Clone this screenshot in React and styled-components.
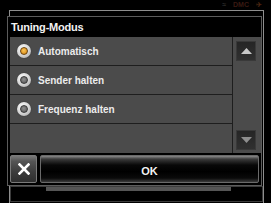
import React from "react";
import styled, { createGlobalStyle } from "styled-components";

const GlobalStyle = createGlobalStyle`
  html, body { margin: 0; padding: 0; background: #000; }
  * { box-sizing: border-box; }
`;

const Screen = styled.div`
  position: relative;
  width: 271px;
  height: 203px;
  overflow: hidden;
  background: #000;
  padding: 16px 0 0 7px;
  font-family: "Liberation Sans", Arial, sans-serif;
`;

const StatusIcons = styled.div`
  position: absolute;
  top: 0;
  right: 9px;
  display: flex;
  gap: 7px;
  font-size: 7px;
  font-weight: bold;
  line-height: 9px;
`;

const StatusGlyph = styled.span`
  color: ${(p) => p.$color};
`;

const BackWindow = styled.div`
  position: absolute;
  left: 9px;
  top: 10px;
  width: 255px;
  height: 200px;
  border: 1px solid #8e8e8e;
`;

const BackInner = styled.div`
  position: absolute;
  left: 0;
  right: 0;
  top: 175px;
  height: 16px;
  border: 1px solid #3c3c3c;
`;

const BackBar = styled.div`
  position: absolute;
  left: 36px;
  top: 176px;
  width: 185px;
  height: 4px;
  background: #555;
`;

const Dialog = styled.div`
  position: relative;
  z-index: 1;
  width: 255px;
  height: 170px;
  border: 1px solid #5c5c5c;
  background: #000;
  display: flex;
  flex-direction: column;
`;

const Title = styled.div`
  height: 20px;
  padding-left: 3px;
  color: #f2f2f2;
  font-size: 11px;
  font-weight: bold;
  line-height: 21px;
  letter-spacing: -0.2px;
`;

const Body = styled.div`
  height: 116px;
  padding-left: 2px;
  display: flex;
`;

const List = styled.div`
  flex: 1;
  background: #4b4b4b;
  display: flex;
  flex-direction: column;
`;

const Row = styled.div`
  height: 29px;
  flex: none;
  border-bottom: 1px solid #1e1e1e;
  display: flex;
  align-items: center;
  gap: 7px;
  padding-left: 7px;
  color: #ececec;
  font-size: 10px;
  font-weight: bold;
`;

const Radio = styled.span`
  width: 14px;
  height: 14px;
  border-radius: 50%;
  background: radial-gradient(circle at 40% 35%, #ffffff 0%, #d8d8d8 50%, #9a9a9a 100%);
  display: flex;
  align-items: center;
  justify-content: center;
  box-shadow: 0 0 1px #222;
`;

const RadioDot = styled.span`
  width: 8px;
  height: 8px;
  border-radius: 50%;
  border: 1px solid ${(p) => (p.$on ? "#6a4410" : "#3a3a3a")};
  background: ${(p) =>
    p.$on
      ? "radial-gradient(circle at 45% 40%, #f8c458 0%, #e49c28 60%, #b07010 100%)"
      : "radial-gradient(circle at 45% 40%, #8e8e8e 0%, #6a6a6a 60%, #4a4a4a 100%)"};
`;

const ScrollCol = styled.div`
  width: 29px;
  border-left: 1px solid #1e1e1e;
  background: #4b4b4b;
  display: flex;
  flex-direction: column;
  justify-content: space-between;
  align-items: flex-start;
  padding: 4px 4px 3px 3px;
`;

const ScrollButton = styled.div`
  width: 20px;
  height: 20px;
  background: linear-gradient(#252525, #303030);
  border: 1px solid #393939;
  display: flex;
  align-items: center;
  justify-content: center;
`;

const Footer = styled.div`
  height: 32px;
  padding: 2px;
  display: flex;
  gap: 3px;
`;

const CloseButton = styled.div`
  width: 27px;
  height: 28px;
  border: 1px solid #7a7a7a;
  border-radius: 2px;
  background: linear-gradient(#7a7a7a 0%, #555 20%, #3d3d3d 60%, #2e2e2e 100%);
  display: flex;
  align-items: center;
  justify-content: center;
`;

const OkButton = styled.div`
  flex: 1;
  height: 28px;
  border: 1px solid #6a6a6a;
  border-radius: 2px;
  background: linear-gradient(#8a8a8a 0%, #3a3a3a 12%, #080808 35%, #000 60%, #0a0a0a 85%, #3a3a3a 100%);
  color: #f4f4f4;
  font-size: 11px;
  font-weight: bold;
  display: flex;
  align-items: center;
  justify-content: center;
  padding-top: 4px;
`;

const options = [
  { label: "Automatisch", on: true },
  { label: "Sender halten", on: false },
  { label: "Frequenz halten", on: false },
];

export default function App() {
  return (
    <>
      <GlobalStyle />
      <Screen>
        <StatusIcons>
          <StatusGlyph $color="#2e2e2e">≈</StatusGlyph>
          <StatusGlyph $color="#3a1a12">DMC</StatusGlyph>
          <StatusGlyph $color="#4a2410">✈</StatusGlyph>
        </StatusIcons>
        <BackWindow>
          <BackInner />
          <BackBar />
        </BackWindow>
        <Dialog>
          <Title>Tuning-Modus</Title>
          <Body>
            <List>
              {options.map((o) => (
                <Row key={o.label}>
                  <Radio>
                    <RadioDot $on={o.on} />
                  </Radio>
                  {o.label}
                </Row>
              ))}
            </List>
            <ScrollCol>
              <ScrollButton>
                <svg width="11" height="6" viewBox="0 0 11 6">
                  <path d="M0 6 L5.5 0 L11 6 Z" fill="#c8c8c8" />
                </svg>
              </ScrollButton>
              <ScrollButton>
                <svg width="11" height="6" viewBox="0 0 11 6">
                  <path d="M0 0 L5.5 6 L11 0 Z" fill="#8e8e8e" />
                </svg>
              </ScrollButton>
            </ScrollCol>
          </Body>
          <Footer>
            <CloseButton>
              <svg width="12" height="12" viewBox="0 0 12 12">
                <path d="M1.5 1.5 L10.5 10.5 M10.5 1.5 L1.5 10.5" stroke="#fff" strokeWidth="2.6" strokeLinecap="square" />
              </svg>
            </CloseButton>
            <OkButton>OK</OkButton>
          </Footer>
        </Dialog>
      </Screen>
    </>
  );
}
